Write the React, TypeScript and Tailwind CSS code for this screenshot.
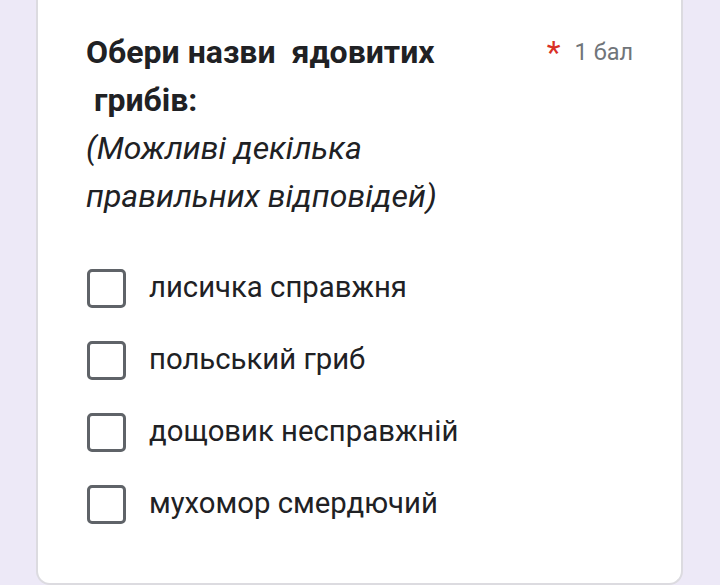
import React from 'react';

const options = [
    'лисичка справжня',
    'польський гриб',
    'дощовик несправжній',
    'мухомор смердючий',
];

function Checkbox() {
    return <span className="block w-[39px] h-[39px] shrink-0 rounded-[5px] border-[3.5px] border-[#5f6368] bg-white" />;
}

export default function App() {
    return (
        <div className="h-[585px] w-[720px] overflow-hidden bg-[#ede9f7] font-['Roboto',sans-serif]">
            <div className="ml-[36px] w-[647px] h-[585px] bg-white border-x-2 border-b-2 border-[#dcdbe0] rounded-b-[14px] pl-[48px] pr-[48px] pt-[28px]">
                <div className="flex justify-between">
                    <div className="text-[32px] leading-[48px] text-[#202124]">
                        <div className="font-bold whitespace-pre">{'Обери назви  ядовитих'}</div>
                        <div className="font-bold whitespace-pre">{' грибів:'}</div>
                        <div className="italic">(Можливі декілька</div>
                        <div className="italic">правильних відповідей)</div>
                    </div>
                    <div className="flex items-start pt-[10px]">
                        <span className="text-[#d93025] text-[32px] leading-[28px] mr-[14px]">*</span>
                        <span className="text-[#70757a] text-[23.5px] leading-[28px]">1 бал</span>
                    </div>
                </div>
                <div className="mt-[32px] flex flex-col">
                    {options.map((o) => (
                        <label key={o} className="flex items-center h-[72px] pl-[1px]">
                            <Checkbox />
                            <span className="ml-[23px] text-[29.3px] text-[#202124]">{o}</span>
                        </label>
                    ))}
                </div>
            </div>
        </div>
    );
}
